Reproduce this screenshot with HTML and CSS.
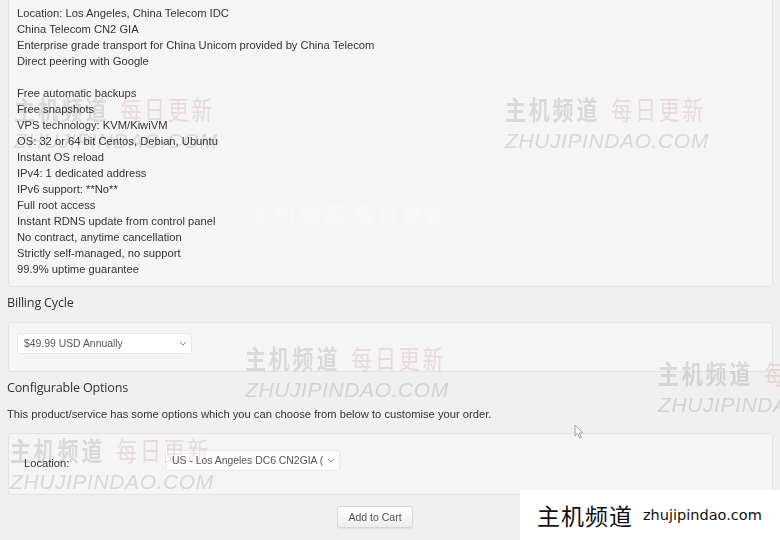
FILE: index.html
```html
<!DOCTYPE html>
<html>
<head>
<meta charset="utf-8">
<link rel="stylesheet" href="styles.css">
</head>
<body>
<div class="page">
  <div class="panel desc">
    <div class="line">Location: Los Angeles, China Telecom IDC</div>
    <div class="line">China Telecom CN2 GIA</div>
    <div class="line">Enterprise grade transport for China Unicom provided by China Telecom</div>
    <div class="line">Direct peering with Google</div>
    <div class="line blank"></div>
    <div class="line">Free automatic backups</div>
    <div class="line">Free snapshots</div>
    <div class="line">VPS technology: KVM/KiwiVM</div>
    <div class="line">OS: 32 or 64 bit Centos, Debian, Ubuntu</div>
    <div class="line">Instant OS reload</div>
    <div class="line">IPv4: 1 dedicated address</div>
    <div class="line">IPv6 support: **No**</div>
    <div class="line">Full root access</div>
    <div class="line">Instant RDNS update from control panel</div>
    <div class="line">No contract, anytime cancellation</div>
    <div class="line">Strictly self-managed, no support</div>
    <div class="line">99.9% uptime guarantee</div>
  </div>

  <h3 class="heading billing-heading">Billing Cycle</h3>
  <div class="panel billing">
    <div class="fake-select cycle">
      <span class="sel-text">$49.99 USD Annually</span>
      <svg class="chev" width="8" height="5" viewBox="0 0 8 5"><path d="M1 1 L4 4 L7 1" fill="none" stroke="#888" stroke-width="1"/></svg>
    </div>
  </div>

  <h3 class="heading config-heading">Configurable Options</h3>
  <p class="intro">This product/service has some options which you can choose from below to customise your order.</p>
  <div class="panel options">
    <div class="opt-row">
      <span class="opt-label">Location:</span>
      <div class="fake-select loc">
        <span class="sel-text">US - Los Angeles DC6 CN2GIA (</span>
        <svg class="chev" width="8" height="5" viewBox="0 0 8 5"><path d="M1 1 L4 4 L7 1" fill="none" stroke="#888" stroke-width="1"/></svg>
      </div>
    </div>
  </div>

  <div class="actions">
    <button class="btn">Add to Cart</button>
  </div>
</div>

<div class="wm-layer">
  <div class="wm wm1"><div class="wm-cn"><span class="g">主机频道</span><span class="p">每日更新</span></div><div class="wm-en">ZHUJIPINDAO.COM</div></div>
  <div class="wm wm2"><div class="wm-cn"><span class="g">主机频道</span><span class="p">每日更新</span></div><div class="wm-en">ZHUJIPINDAO.COM</div></div>
  <div class="wm wm3"><div class="wm-cn"><span class="g">主机频道</span><span class="p">每日更新</span></div><div class="wm-en">ZHUJIPINDAO.COM</div></div>
  <div class="wm wm4"><div class="wm-cn"><span class="g">主机频道</span><span class="p">每日更新</span></div><div class="wm-en">ZHUJIPINDAO.COM</div></div>
  <div class="wm wm5"><div class="wm-cn"><span class="g">主机频道</span><span class="p">每日更新</span></div><div class="wm-en">ZHUJIPINDAO.COM</div></div>
</div>
<div class="wm-white">主机频道 每日更新</div>

<svg class="cursor" width="12" height="16" viewBox="0 0 12 16"><path d="M1 1 L1 12 L3.6 9.6 L5.6 14 L7.4 13.2 L5.4 8.9 L9 8.9 Z" fill="#fafafa" stroke="#999" stroke-width="0.9" stroke-linejoin="round"/></svg>

<div class="brand"><span class="brand-cn">主机频道</span><span class="brand-en">zhujipindao.com</span></div>
</body>
</html>
```
FILE: styles.css
```css
html, body {
  margin: 0;
  padding: 0;
}
body {
  background: #f0f0f0;
  font-family: "Liberation Sans", Arial, sans-serif;
  color: #333;
  width: 780px;
  height: 540px;
  overflow: hidden;
  position: relative;
}
.page {
  padding: 0 7px;
}
.panel {
  background: #f5f5f5;
  border: 1px solid #e4e4e4;
  border-radius: 3px;
  margin-left: 1px;
}
.desc {
  margin-top: -6px;
  padding: 10px 8px 9px 8px;
  font-size: 11.2px;
  line-height: 16px;
}
.line {
  height: 16px;
  white-space: nowrap;
}
.heading {
  font-family: "Open Sans", "Noto Sans", sans-serif;
  font-weight: 400;
  font-size: 12.6px;
  line-height: 20px;
  margin: 0;
  color: #333;
  letter-spacing: -0.2px;
}
.billing-heading {
  margin-top: 6px;
  margin-bottom: 9px;
}
.billing {
  padding: 10px 8px 17px 8px;
}
.fake-select {
  height: 21px;
  box-sizing: border-box;
  background: #fff;
  border: 1px solid #e8e8e8;
  border-radius: 2px;
  display: flex;
  align-items: center;
  justify-content: space-between;
  padding: 0 4px 0 6px;
  font-size: 10.4px;
  color: #555;
}
.cycle {
  width: 175px;
}
.loc {
  width: 175px;
}
.sel-text {
  white-space: nowrap;
  overflow: hidden;
}
.chev {
  flex: none;
  margin-left: 4px;
}
.config-heading {
  margin-top: 6px;
}
.intro {
  margin: 8px 0 11px 0;
  font-size: 11.2px;
  line-height: 16px;
}
.options {
  padding: 16px 8px 23px 15px;
}
.opt-row {
  display: flex;
  align-items: center;
}
.opt-label {
  width: 141px;
  font-size: 11.2px;
  color: #333;
  padding-top: 4px;
}
.actions {
  padding-left: 330px;
  margin-top: 11px;
}
.btn {
  width: 76px;
  height: 22px;
  font-family: "Liberation Sans", Arial, sans-serif;
  font-size: 10.5px;
  color: #555;
  background: linear-gradient(#ffffff, #ededed);
  border: 1px solid #d8d8d8;
  border-radius: 3px;
  box-shadow: 0 1px 1px rgba(0,0,0,0.05);
  padding: 0;
}
.wm-layer {
  position: absolute;
  left: 0;
  top: 0;
  width: 780px;
  height: 540px;
  overflow: hidden;
  pointer-events: none;
  mix-blend-mode: multiply;
}
.wm {
  position: absolute;
  white-space: nowrap;
}
.wm-cn {
  font-family: "Noto Sans CJK SC", sans-serif;
  font-weight: 700;
  font-size: 21px;
  line-height: 28px;
  height: 28px;
  letter-spacing: 2.8px;
  transform: scaleY(1.25);
  transform-origin: left center;
}
.wm-cn .g {
  color: #e3e3e3;
}
.wm-cn .p {
  color: #f3e4e4;
  font-weight: 400;
  margin-left: 11px;
}
.wm-en {
  font-family: "Liberation Sans", Arial, sans-serif;
  font-style: italic;
  font-size: 21px;
  line-height: 22px;
  margin-top: 7px;
  color: #e2e2e2;
  letter-spacing: 0.6px;
}
.wm1 { left: 14px; top: 95px; }
.wm2 { left: 505px; top: 95px; }
.wm3 { left: 245px; top: 344px; }
.wm4 { left: 658px; top: 359px; }
.wm5 { left: 10px; top: 436px; }
.wm-white {
  position: absolute;
  left: 250px;
  top: 196px;
  font-family: "Noto Sans CJK SC", sans-serif;
  font-weight: 700;
  font-size: 22px;
  letter-spacing: 2px;
  color: rgba(255, 255, 255, 0.2);
  white-space: nowrap;
  pointer-events: none;
}
.cursor {
  position: absolute;
  left: 574px;
  top: 424px;
}
.brand {
  position: absolute;
  left: 520px;
  top: 490px;
  width: 260px;
  height: 50px;
  background: #fff;
  display: flex;
  align-items: center;
  box-sizing: border-box;
  padding-left: 17px;
  color: #111;
}
.brand-cn {
  font-family: "Noto Sans CJK SC", sans-serif;
  font-size: 23px;
  letter-spacing: 1px;
}
.brand-en {
  font-family: "DejaVu Sans", sans-serif;
  font-size: 14.5px;
  margin-left: 10px;
}
```
